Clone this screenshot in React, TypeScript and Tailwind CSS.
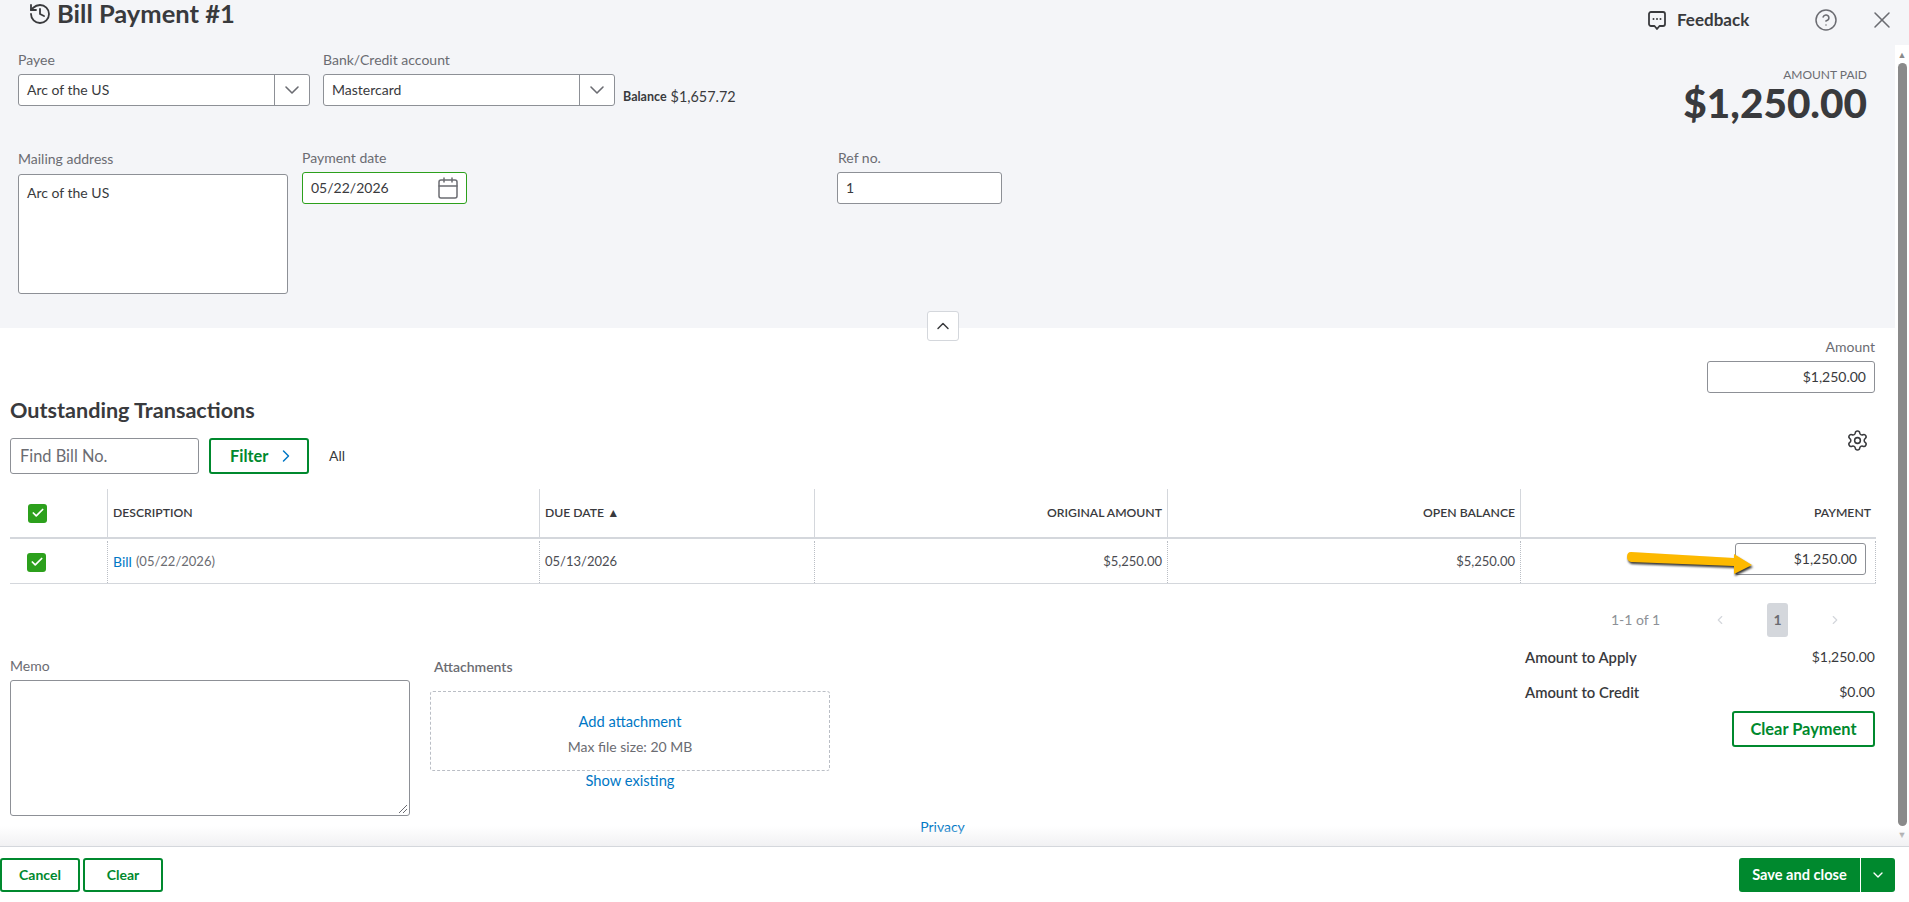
import { Calendar, Check, ChevronDown, ChevronLeft, ChevronRight, ChevronUp, CircleHelp, History, Settings, X } from "lucide-react";

const labelCls = "block h-5 text-sm leading-5 text-[#6b6c72]";
const inputBase = "flex items-center rounded-[3px] border bg-white text-sm";
const inputCls = `${inputBase} border-[#8d9096] text-[#393a3d]`;
const greenBtn = "flex items-center justify-center rounded-[3px] border-2 border-[#00892e] bg-white text-sm font-bold text-[#00892e]";
const gridCols = "grid grid-cols-[97px_432px_275px_353px_353px_356px]";

const SelectBox = ({ value }: { value: string }) => (
  <div className={`${inputCls} h-8 w-[292px]`}>
    <span className="flex-1 pl-[8px]">{value}</span>
    <span className="flex h-full w-[35px] items-center justify-center border-l border-[#8d9096]">
      <ChevronDown size={24} strokeWidth={1.6} className="text-[#6b6c72]" />
    </span>
  </div>
);

const GreenCheck = () => (
  <span className="flex h-[19px] w-[19px] items-center justify-center rounded-[3px] bg-[#2ca01c]">
    <Check size={14} strokeWidth={3} className="text-white" />
  </span>
);

const FeedbackIcon = () => (
  <svg width="20" height="20" viewBox="0 0 20 20" fill="none" className="text-[#393a3d]">
    <path
      d="M4 2h12a2 2 0 0 1 2 2v10a2 2 0 0 1-2 2h-3.5L10 19l-2.5-3H4a2 2 0 0 1-2-2V4a2 2 0 0 1 2-2z"
      stroke="currentColor"
      strokeWidth="1.8"
      strokeLinejoin="round"
    />
    <circle cx="6.5" cy="9" r="1" fill="currentColor" />
    <circle cx="10" cy="9" r="1" fill="currentColor" />
    <circle cx="13.5" cy="9" r="1" fill="currentColor" />
  </svg>
);

const YellowArrow = () => (
  <svg
    width="136"
    height="34"
    viewBox="0 0 136 34"
    className="absolute left-[100px] top-[6px] drop-shadow-[1px_2px_1px_rgba(0,0,0,0.8)]"
  >
    <path d="M10 5 L113 11 L113 7 L131 18 L113 27 L113 19 L10 15 Q6 14 6 10 Q6 5 10 5Z" fill="#fdb900" />
  </svg>
);

export default function App() {
  return (
    <div className="flex h-[902px] w-[1909px] flex-col overflow-hidden bg-white font-[family-name:Lato,sans-serif] text-[#393a3d]">
      {/* Top title strip */}
      <div className="flex h-[45px] shrink-0 items-start bg-[#f4f5f8] pr-[13px]">
        <History size={24} strokeWidth={1.8} className="ml-[28px] mt-[2px] text-[#393a3d]" />
        <h1 className="ml-[5px] text-[25.5px] font-bold leading-[26px]">Bill Payment #1</h1>
        <div className="ml-auto mt-[10px] flex h-5 items-center">
          <FeedbackIcon />
          <span className="ml-[10px] w-[137px] text-[17px] font-bold">Feedback</span>
          <CircleHelp size={24} strokeWidth={1.5} className="text-[#6b6c72]" />
          <X size={28} strokeWidth={1.3} className="ml-[30px] text-[#6b6c72]" />
        </div>
      </div>

      <div className="flex min-h-0 flex-1">
        <main className="relative w-[1895px] overflow-hidden">
          {/* Form header */}
          <section className="relative h-[283px] bg-[#f4f5f8] pl-[18px] pr-[28px]">
            <div className="flex h-[103px] pt-[5px]">
              <div>
                <label className={labelCls}>Payee</label>
                <div className="mt-[4px]">
                  <SelectBox value="Arc of the US" />
                </div>
              </div>
              <div className="ml-[13px]">
                <label className={labelCls}>Bank/Credit account</label>
                <div className="mt-[4px]">
                  <SelectBox value="Mastercard" />
                </div>
              </div>
              <div className="ml-[8px] mt-[37px] flex items-center gap-[4px] self-start leading-5">
                <span className="text-[12.5px] font-bold">Balance</span>
                <span className="text-[14.4px]">$1,657.72</span>
              </div>
              <div className="ml-auto mt-[17px] text-right">
                <div className="text-xs leading-4 text-[#6b6c72]">AMOUNT PAID</div>
                <div className="mt-px text-[40.5px] font-black leading-[38px]">$1,250.00</div>
              </div>
            </div>
            <div className="flex">
              <div className="mt-px w-[270px]">
                <label className={labelCls}>Mailing address</label>
                <div className={`${inputCls} mt-[5px] h-[120px] w-[270px] items-start px-[8px] py-[8px]`}>Arc of the US</div>
              </div>
              <div className="ml-[14px] w-[165px]">
                <label className={labelCls}>Payment date</label>
                <div className={`${inputBase} mt-[4px] h-8 justify-between border-[#2ca01c] pl-[8px] pr-[6px] text-[#393a3d]`}>
                  05/22/2026
                  <Calendar size={24} strokeWidth={1.5} className="text-[#6b6c72]" />
                </div>
              </div>
              <div className="ml-[370px] w-[165px]">
                <label className={`${labelCls} pl-[1px]`}>Ref no.</label>
                <div className={`${inputCls} mt-[4px] h-8 pl-[8px]`}>1</div>
              </div>
            </div>
            <button className="absolute -bottom-[13px] left-[927px] flex h-[30px] w-[32px] items-center justify-center rounded-[3px] border border-[#d4d7dc] bg-white">
              <ChevronUp size={20} strokeWidth={1.75} className="text-[#393a3d]" />
            </button>
          </section>

          {/* Amount */}
          <div className="flex justify-end pr-[20px] pt-[9px]">
            <div className="w-[168px] text-right">
              <label className={labelCls}>Amount</label>
              <div className={`${inputCls} mt-[4px] h-[32px] justify-end pr-[8px]`}>$1,250.00</div>
            </div>
          </div>

          {/* Outstanding transactions */}
          <h2 className="ml-[10px] mt-[4px] h-[26px] text-[21.6px] font-bold leading-[26px]">Outstanding Transactions</h2>
          <div className="ml-[10px] mr-[26px] mt-[15px] flex h-9 items-center">
            <div className={`${inputBase} h-9 w-[189px] border-[#8d9096] pl-[9px] text-[16.4px] text-[#6b6c72]`}>Find Bill No.</div>
            <button className={`${greenBtn} ml-[10px] h-9 w-[100px] justify-start gap-[8px] pl-[19px] text-[16.4px]`}>
              Filter
              <ChevronRight size={20} strokeWidth={1.75} className="text-[#0077c5]" />
            </button>
            <span className="ml-[20px] text-sm">All</span>
            <Settings size={23} strokeWidth={1.6} className="-mt-[31px] ml-auto text-[#393a3d]" />
          </div>

          <div className="ml-[10px] mt-[15px] w-[1866px] text-[12.2px]">
            <div className={`${gridCols} h-[50px] items-stretch border-b-2 border-[#d4d7dc] font-semibold`}>
              <div className="flex items-center pl-[18px]">
                <GreenCheck />
              </div>
              <div className="flex items-center border-l border-[#d4d7dc] pl-[5px]">DESCRIPTION</div>
              <div className="flex items-center border-l border-[#d4d7dc] pl-[5px]">DUE DATE ▲</div>
              <div className="flex items-center justify-end border-l border-[#d4d7dc] pr-[5px]">ORIGINAL AMOUNT</div>
              <div className="flex items-center justify-end border-l border-[#d4d7dc] pr-[5px]">OPEN BALANCE</div>
              <div className="flex items-center justify-end border-l border-[#d4d7dc] pr-[5px]">PAYMENT</div>
            </div>
            <div className={`${gridCols} h-[45px] items-stretch border-b border-[#d4d7dc] pt-[2px] text-[13px] text-[#4b4c52]`}>
              <div className="flex items-center pl-[17px]">
                <GreenCheck />
              </div>
              <div className="flex items-center border-l border-dotted border-[#babec5] pl-[5px]">
                <span className="text-sm text-[#0077c5]">Bill</span>
                <span className="ml-1 text-[#6b6c72]">(05/22/2026)</span>
              </div>
              <div className="flex items-center border-l border-dotted border-[#babec5] pl-[5px]">05/13/2026</div>
              <div className="flex items-center justify-end border-l border-dotted border-[#babec5] pr-[5px]">$5,250.00</div>
              <div className="flex items-center justify-end border-l border-dotted border-[#babec5] pr-[5px]">$5,250.00</div>
              <div className="relative flex items-start justify-end border-x border-dotted border-[#babec5] pr-[9px] pt-[2px]">
                <div className={`${inputCls} h-8 w-[131px] justify-end pr-[8px]`}>$1,250.00</div>
                <YellowArrow />
              </div>
            </div>
          </div>

          {/* Pagination */}
          <div className="mt-[19px] flex h-[34px] items-center pl-[1611px] text-sm text-[#8d9096]">
            <span>1-1 of 1</span>
            <ChevronLeft size={14} className="ml-[53px] text-[#d4d7dc]" />
            <span className="ml-[40px] flex h-[34px] w-[21px] items-center justify-center rounded-[3px] bg-[#d4d7dc] font-bold text-[#6b6c72]">1</span>
            <ChevronRight size={14} className="ml-[40px] text-[#d4d7dc]" />
          </div>

          {/* Memo, attachments, totals */}
          <div className="mt-[19px] flex pl-[10px] pr-[20px]">
            <div className="w-[400px]">
              <label className={labelCls}>Memo</label>
              <div className="relative mt-[4px] h-[136px] rounded-[3px] border border-[#8d9096]">
                <svg width="10" height="10" viewBox="0 0 10 10" className="absolute bottom-[1px] right-[1px] text-[#6b6c72]">
                  <path d="M9 1 1 9M9 5 5 9" stroke="currentColor" fill="none" />
                </svg>
              </div>
            </div>
            <div className="ml-[20px] w-[400px]">
              <div className="ml-[4px] mt-px h-5 text-sm font-semibold leading-5 text-[#6b6c72]">Attachments</div>
              <div className="mt-[14px] flex h-[80px] flex-col items-center justify-center gap-[5px] rounded-[3px] border border-dashed border-[#babec5] pt-[5px] text-sm">
                <span className="text-[14.7px] text-[#0077c5]">Add attachment</span>
                <span className="text-[#6b6c72]">Max file size: 20 MB</span>
              </div>
              <div className="text-center text-[14.7px] leading-[18px] text-[#0077c5]">Show existing</div>
            </div>
            <div className="-mt-[9px] ml-auto w-[350px] text-[14.8px]">
              <div className="flex h-5 items-center justify-between">
                <span className="font-semibold">Amount to Apply</span>
                <span className="text-sm">$1,250.00</span>
              </div>
              <div className="mt-[15px] flex h-5 items-center justify-between">
                <span className="font-semibold">Amount to Credit</span>
                <span className="text-sm">$0.00</span>
              </div>
              <button className={`${greenBtn} ml-auto mt-[9px] h-9 w-[143px] text-[16.4px]`}>Clear Payment</button>
            </div>
          </div>
          <div className="mt-px flex h-5 justify-center pr-[10px] text-sm leading-5 text-[#0077c5]">Privacy</div>
        </main>

        {/* Scrollbar */}
        <div className="flex w-[14px] flex-col items-center bg-white pt-[5px]">
          <span className="text-[9px] leading-[10px] text-[#8a8a8a]">▲</span>
          <div className="mt-[3px] h-[763px] w-[9px] rounded-full bg-[#8a8a8a]" />
          <span className="mt-[4px] text-[9px] leading-[10px] text-[#8a8a8a]">▼</span>
        </div>
      </div>

      {/* Footer */}
      <footer className="relative flex h-[56px] shrink-0 items-start justify-between border-t border-[#d4d7dc] pr-[14px] pt-[11px]">
        <div className="absolute -top-[21px] left-0 h-5 w-full bg-gradient-to-b from-transparent to-[#f1f1f3]" />
        <div className="flex gap-[3px]">
          <button className={`${greenBtn} h-[34px] w-[80px]`}>Cancel</button>
          <button className={`${greenBtn} h-[34px] w-[80px]`}>Clear</button>
        </div>
        <div className="flex h-[34px] w-[156px] items-stretch rounded-[3px] bg-[#00892e] text-[14.6px] font-bold text-white">
          <span className="flex w-[121px] items-center justify-center">Save and close</span>
          <span className="flex flex-1 items-center justify-center border-l border-white">
            <ChevronDown size={16} strokeWidth={2} />
          </span>
        </div>
      </footer>
    </div>
  );
}
